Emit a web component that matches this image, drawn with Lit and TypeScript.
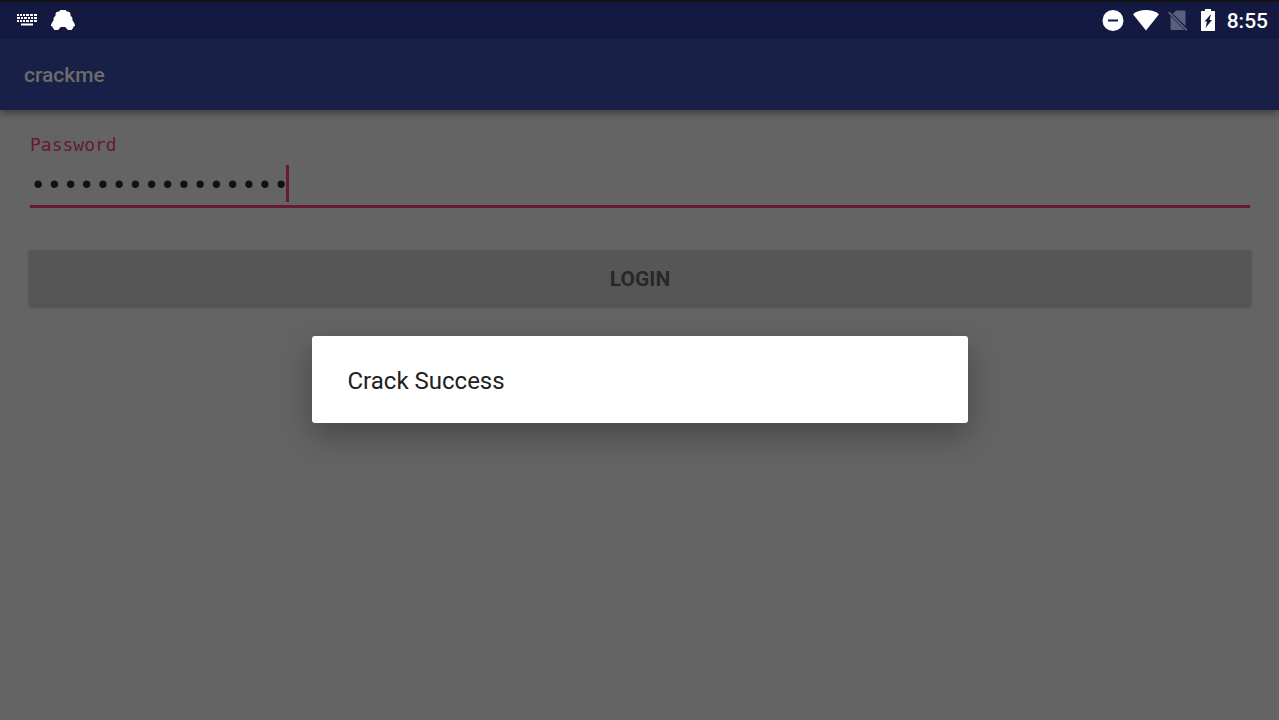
import { LitElement, html, css } from "lit";
import { customElement, state } from "lit/decorators.js";

const keyboardIcon = html`<svg width="20" height="12" viewBox="0 0 20 12" aria-hidden="true">
  <path stroke="currentColor" stroke-width="2" fill="none"
    d="M0 1h2M3 1h2M6 1h2M9 1h3M13 1h3M17 1h3M0 4h3M4 4h2M7 4h3M11 4h2M14 4h2M17 4h3M0 7h2M3 7h2M6 7h2M9 7h3M13 7h3M17 7h3M4 10.500h12" />
</svg>`;

const carIcon = html`<svg width="24" height="20" viewBox="0 0 24 20" aria-hidden="true">
  <path fill="currentColor"
    d="M8 1.500 9.500 0h5L16 1.500l2.500.5 1 2v2l1.500 1 .5 2v1.500l1.500 2 1 2.500v1l-1.500.5v1L20.500 20h-3.500L15 18l-.5-1h-5L9 18l-2 2H3.500l-2-2.500v-1L0 16v-1l1-2.500 1.500-2V9L3 7l1.500-1V4l1-2Z" />
</svg>`;

const dndIcon = html`<svg width="22" height="22" viewBox="0 0 22 22" aria-hidden="true">
  <circle cx="11" cy="11.500" r="10.500" fill="currentColor" />
  <path d="M6 11.500h10" stroke="#131940" stroke-width="2" />
</svg>`;

const wifiIcon = html`<svg width="26" height="21" viewBox="0 0 26 21" aria-hidden="true">
  <path fill="currentColor" d="M13 20.500 0 4.200C3.500 1.200 8 0 13 0s9.500 1.200 13 4.200Z" />
</svg>`;

const noSimIcon = html`<svg class="dimmed" width="24" height="21" viewBox="0 0 24 21" aria-hidden="true">
  <path fill="currentColor"
    d="M8 .5h8.500a1 1 0 0 1 1 1V16L4.800 3.700ZM2.500 6 16.500 20H4a1.500 1.500 0 0 1-1.500-1.500ZM1.400 1.500 19.600 19.700 18.300 21 0 2.800Z" />
</svg>`;

const batteryIcon = html`<svg width="14" height="22" viewBox="0 0 14 22" aria-hidden="true">
  <path fill="currentColor" fill-rule="evenodd"
    d="M4 0h6v2h3.500l.5.5v19l-.5.5H.5l-.5-.5v-19L.5 2H4ZM10 5 3.500 12.500H6L4.500 19l6.500-8H8.500Z" />
</svg>`;

@customElement("app-root")
export class AppRoot extends LitElement {
  static styles = css`
    :host {
      display: flex;
      flex-direction: column;
      position: relative;
      min-height: 100vh;
      background: #646464;
      font-family: Roboto, sans-serif;
    }
    .status {
      display: flex;
      justify-content: space-between;
      align-items: center;
      box-sizing: border-box;
      height: 38px;
      padding: 0 11px 0 17px;
      border-top: 2px solid #131313;
      background: #131940;
      color: #fff;
    }
    .group {
      display: flex;
      align-items: center;
      gap: 14px;
    }
    .group.system {
      gap: 9px;
    }
    svg {
      display: block;
    }
    .dimmed {
      opacity: 0.3;
    }
    .clock {
      padding: 2px 0 0 3px;
      font-size: 21px;
      line-height: 24px;
      font-weight: 500;
    }
    .toolbar {
      display: flex;
      align-items: center;
      box-sizing: border-box;
      height: 72px;
      padding: 2px 24px 0;
      background: #192048;
      box-shadow: 0 3px 8px rgba(0, 0, 0, 0.4);
    }
    h1 {
      margin: 0;
      font-size: 21px;
      line-height: 24px;
      font-weight: 500;
      color: #6c6c6c;
    }
    form {
      display: flex;
      flex-direction: column;
      padding: 23px 28px 22px 29px;
    }
    .caption {
      margin-left: 1px;
      font: 18px/24px "DejaVu Sans Mono", monospace;
      color: #661a34;
    }
    .field {
      position: relative;
      display: flex;
      margin: 5px 1px 42px;
      border-bottom: 3px solid #661a34;
      font: 27px/32px "Liberation Mono", monospace;
    }
    input {
      flex: 1;
      min-width: 0;
      box-sizing: border-box;
      height: 43px;
      padding: 5px 0 0;
      border: 0;
      outline: 0;
      background: none;
      color: #111;
      font: inherit;
    }
    .caret {
      position: absolute;
      top: 3px;
      bottom: 3px;
      left: 256px;
      width: 3px;
      background: #661a34;
    }
    button {
      height: 56px;
      padding: 2px 0 0;
      border: 0;
      border-radius: 3px;
      background: #565656;
      box-shadow: 0 1px 3px rgba(0, 0, 0, 0.3);
      font: 700 21px/24px Roboto, sans-serif;
      color: #282828;
    }
    .overlay {
      position: absolute;
      inset: 38px 0 0;
      display: flex;
      align-items: center;
      justify-content: center;
    }
    .dialog {
      box-sizing: border-box;
      width: 656px;
      max-width: 90%;
      padding: 29px 36px 25px;
      border-radius: 3px;
      background: #fff;
      box-shadow: 0 12px 32px rgba(0, 0, 0, 0.3);
      font-size: 24px;
      line-height: 33px;
      color: #212121;
    }
    p {
      margin: 0;
    }
  `;

  @state() private password = "0123456789abcdef";

  render() {
    return html`
      <header class="status">
        <div class="group">${keyboardIcon}${carIcon}</div>
        <div class="group system">
          ${dndIcon}${wifiIcon}${noSimIcon}${batteryIcon}
          <span class="clock">8:55</span>
        </div>
      </header>
      <div class="toolbar"><h1>crackme</h1></div>
      <form>
        <label class="caption" for="password">Password</label>
        <div class="field">
          <input id="password" type="password" .value=${this.password} />
          <span class="caret"></span>
        </div>
        <button type="button">LOGIN</button>
      </form>
      <div class="overlay">
        <div class="dialog" role="dialog" aria-label="Crack Success"><p>Crack Success</p></div>
      </div>
    `;
  }
}
